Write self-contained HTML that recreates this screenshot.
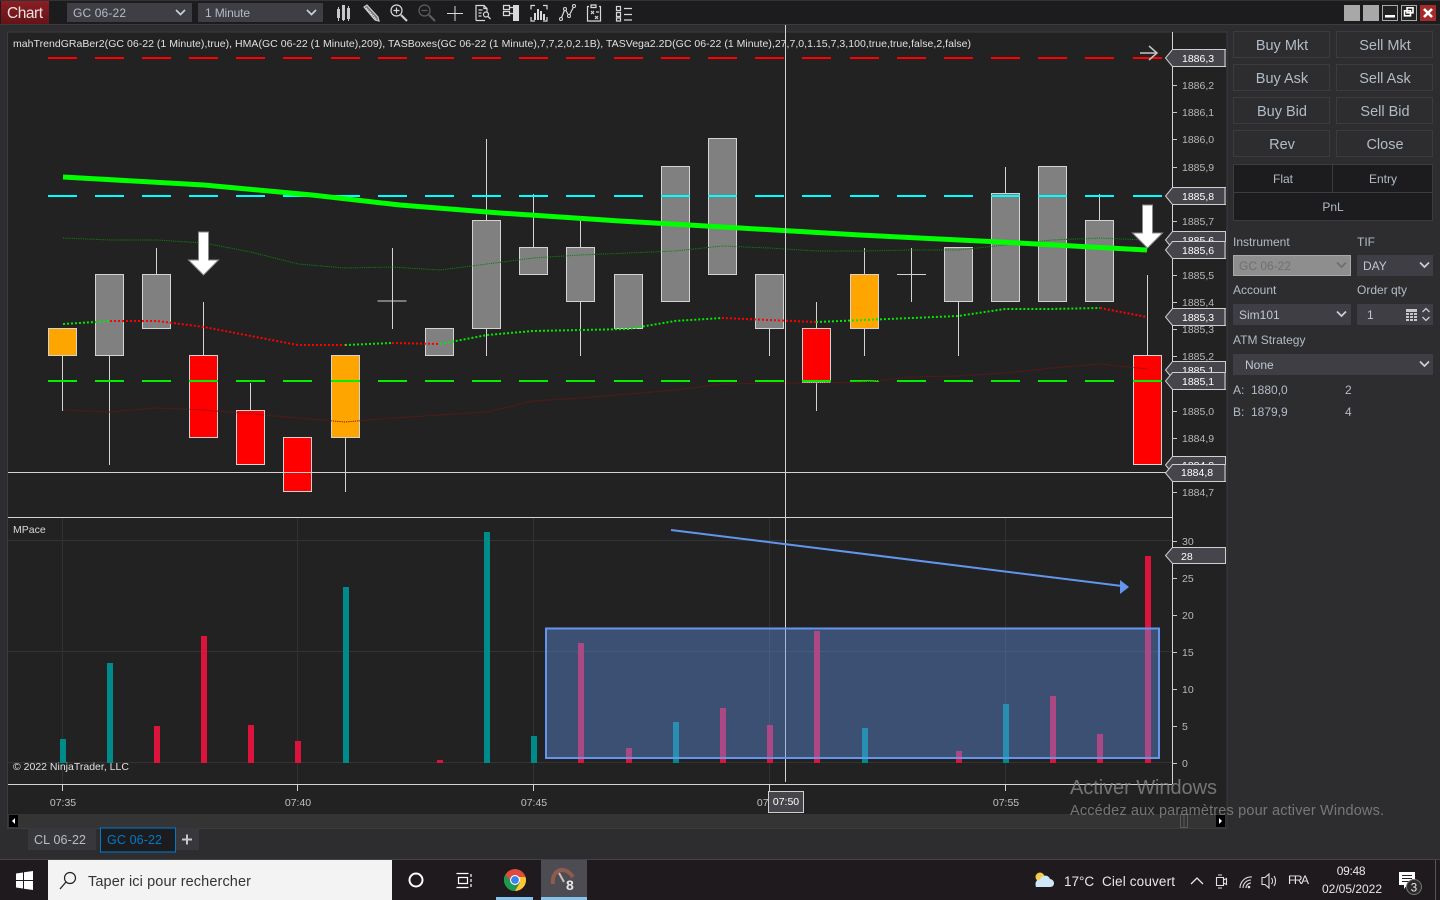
<!DOCTYPE html>
<html><head><meta charset="utf-8"><title>Chart</title>
<style>
html,body{margin:0;padding:0;background:#2d2d30;overflow:hidden}
svg{display:block}
text{font-family:"Liberation Sans",sans-serif}
.s{font-size:10.5px;fill:#b8b8b8}
.tag{font-size:10.5px;fill:#fff;font-weight:400}
.b{font-size:14.5px;fill:#b2bcc6;text-anchor:middle}
.l{font-size:12px;fill:#b2bcc6}
.h{fill:#2d2d30;stroke:#3c3c40;stroke-width:1}
.c{fill:#3e3e44}
.ch{fill:none;stroke:#c8d0d8;stroke-width:1.7}
.k{stroke:#d3d3d3;stroke-width:1;fill:#808080}
.i{fill:none;stroke:#d8d8d8;stroke-width:1.2}
</style></head><body>
<svg width="1440" height="900" viewBox="0 0 1440 900" xmlns="http://www.w3.org/2000/svg">
<rect width="1440" height="900" fill="#2d2d30"/>
<!-- toolbar -->
<rect width="1440" height="24" fill="#1c1c1e"/>
<rect y="0" width="1440" height="1" fill="#333"/>
<rect y="24" width="1440" height="1" fill="#3c3c40"/>
<defs><linearGradient id="r" x1="0" y1="0" x2="0" y2="1"><stop offset="0" stop-color="#8a1e24"/><stop offset="1" stop-color="#651317"/></linearGradient></defs>
<rect x="1" y="1" width="48" height="23" fill="url(#r)"/>
<text x="7" y="18" font-size="15.5" fill="#e8e0e0" textLength="36">Chart</text>
<rect x="67" y="3" width="125" height="19" class="c"/>
<text x="73" y="17" font-size="12" fill="#b2bcc6" textLength="53">GC 06-22</text>
<path d="M176 10l4.500 4.500 4.500-4.500" class="ch"/>
<rect x="198" y="3" width="125" height="19" class="c"/>
<text x="205" y="17" font-size="12" fill="#b2bcc6" textLength="45">1 Minute</text>
<path d="M307 10l4.500 4.500 4.500-4.500" class="ch"/>
<!-- toolbar icons -->
<g fill="#c8c8c8"><rect x="337" y="9" width="3" height="9"/><rect x="342" y="5" width="3" height="15"/><rect x="347" y="8" width="3" height="11"/><rect x="338" y="7" width="1" height="14"/><rect x="343" y="5" width="1" height="16"/><rect x="348" y="6" width="1" height="15"/></g>
<path d="M364 7l3-2 11 12 1 4-4-1z" fill="#777" stroke="#ccc" stroke-width="1.2"/><path d="M366 8l10 11" stroke="#eee" stroke-width="1.500" stroke-dasharray="1 1"/>
<g class="i"><circle cx="396.500" cy="10.500" r="5.500"/><path d="M393.500 10.500h6M396.500 7.500v6"/></g><path d="M401 15l6 6" stroke="#ccc" stroke-width="2.200"/>
<g fill="none" stroke="#5d5d5d" stroke-width="1.200"><circle cx="424.500" cy="10.500" r="5.500"/><path d="M421.500 10.500h6"/></g><path d="M429 15l6 6" stroke="#5d5d5d" stroke-width="2.200"/>
<path d="M447 13.500h16M455 6v15" stroke="#d8d8d8" stroke-width="1"/>
<path d="M476 20.500v-15h8l3 3v4M476 20.500h9M484 5.500v3h3M478.500 10h4M478.500 13h3M478.500 16h3" class="i"/><circle cx="486" cy="14.500" r="2.500" class="i"/><path d="M488 16.500l2.500 2.500" stroke="#d8d8d8" stroke-width="1.300"/>
<path d="M503.500 5.500h6v4h-6zM503.500 11.500h6v4h-6zM509 7.500h4M509 13.500h4" class="i"/><rect x="513" y="5" width="6" height="16" fill="#d8d8d8"/>
<path d="M531 9.500v-4h4M543 5.500h4v4M531 17v4h4M543 21h4v-4" class="i"/><g fill="#d8d8d8"><rect x="534" y="13" width="2" height="7"/><rect x="537" y="9" width="2" height="11"/><rect x="540" y="11" width="2" height="9"/><rect x="543" y="14" width="2" height="6"/></g>
<path d="M561 19l4-10 4 7 5-10" class="i"/><g fill="#1c1c1e" stroke="#d8d8d8"><circle cx="561" cy="19" r="1.500"/><circle cx="565" cy="9" r="1.500"/><circle cx="569" cy="16" r="1.500"/><circle cx="574" cy="6" r="1.500"/></g>
<path d="M589 6.500h-1.500v14.500h13v-14.500h-1.500M591 5h5v2.500h-5zM591 11l3 3M594 11l-3 3M595 16l3 3M598 16l-3 3M596 12h3" class="i"/>
<path d="M616.500 6.500h4v4h-4zM616.500 12.500h4v4h-4zM616.500 18h4v3h-4zM624 8.500h8M624 14.500h8M624 20h8" class="i"/>
<!-- window buttons -->
<rect x="1344" y="5" width="16" height="16" fill="#a8a8a8"/><rect x="1363" y="5" width="16" height="16" fill="#a8a8a8"/>
<rect x="1382.500" y="5.500" width="15" height="15" fill="#222" stroke="#aaa"/><rect x="1385" y="15" width="10" height="2.500" fill="#fff"/>
<rect x="1401.500" y="5.500" width="15" height="15" fill="#222" stroke="#aaa"/><path d="M1407 7.800h6v5h-6zM1404.500 10.800h6v5h-6z" fill="#222" stroke="#fff" stroke-width="1.600"/>
<rect x="1420" y="5" width="16" height="16" fill="#a52a2a"/><path d="M1424 9l8 8M1432 9l-8 8" stroke="#fff" stroke-width="2.600"/>

<!-- chart frame -->
<rect x="8" y="32" width="1219" height="796" fill="#222222"/>
<path d="M7.500 32v796.500h1219.500v-796.500z" fill="none" stroke="#3c3c40"/>
<rect x="8" y="814" width="1218" height="14" fill="#343434"/>

<!-- lower panel grid -->
<path d="M8 540.500h1164M8 651.500h1164M8 762.500h1164M62.500 518v267M297.500 518v267M533.500 518v267M769.500 518v267M1005.500 518v267" stroke="#333335" stroke-width="1"/>

<!-- wicks -->
<path d="M62.500 356v55M109.500 356v109M156.500 248v26M203.500 302v54M250.500 383v28M345.500 437v55M392.500 248v81M377.500 301h29M486.500 139v81M486.500 329v27M533.500 194v53M580.500 221v26M580.500 302v54M769.500 329v27M816.500 302v27M816.500 383v28M864.500 248v26M864.500 329v27M911.500 248v54M897 274.500h29M958.500 302v54M1005.500 167v27M1099.500 194v26M1147.500 275v80" stroke="#d3d3d3" stroke-width="1" fill="none"/>
<!-- candle bodies -->
<g class="k">
<rect x="48.500" y="328.500" width="28" height="27" fill="#ffa500"/>
<rect x="95.500" y="274.500" width="28" height="81"/>
<rect x="142.500" y="274.500" width="28" height="54"/>
<rect x="189.500" y="355.500" width="28" height="82" fill="#ff0000"/>
<rect x="236.500" y="410.500" width="28" height="54" fill="#ff0000"/>
<rect x="283.500" y="437.500" width="28" height="54" fill="#ff0000"/>
<rect x="331.500" y="355.500" width="28" height="82" fill="#ffa500"/>
<rect x="425.500" y="328.500" width="28" height="27"/>
<rect x="472.500" y="220.500" width="28" height="108"/>
<rect x="519.500" y="247.500" width="28" height="27"/>
<rect x="566.500" y="247.500" width="28" height="54"/>
<rect x="614.500" y="274.500" width="28" height="54"/>
<rect x="661.500" y="166.500" width="28" height="135"/>
<rect x="708.500" y="138.500" width="28" height="136"/>
<rect x="755.500" y="274.500" width="28" height="54"/>
<rect x="802.500" y="328.500" width="28" height="54" fill="#ff0000"/>
<rect x="850.500" y="274.500" width="28" height="54" fill="#ffa500"/>
<rect x="944.500" y="247.500" width="28" height="54"/>
<rect x="991.500" y="193.500" width="28" height="108"/>
<rect x="1038.500" y="166.500" width="28" height="135"/>
<rect x="1085.500" y="220.500" width="28" height="81"/>
<rect x="1133.500" y="355.500" width="28" height="109" fill="#ff0000"/>
</g>
<!-- dashes -->
<g id="d" fill="none" stroke-width="2">
<path stroke="#ff0000" d="M48 58h29M95 58h29M142 58h29M189 58h29M236 58h29M283 58h29M331 58h29M378 58h29M425 58h29M472 58h29M519 58h29M566 58h29M614 58h29M661 58h29M708 58h29M755 58h29M802 58h29M850 58h29M897 58h29M944 58h29M991 58h29M1038 58h29M1085 58h29M1133 58h29"/>
<path stroke="#00ffff" d="M48 196h29M95 196h29M142 196h29M189 196h29M236 196h29M283 196h29M331 196h29M378 196h29M425 196h29M472 196h29M519 196h29M566 196h29M614 196h29M661 196h29M708 196h29M755 196h29M802 196h29M850 196h29M897 196h29M944 196h29M991 196h29M1038 196h29M1085 196h29M1133 196h29"/>
<path stroke="#00f000" d="M48 381h29M95 381h29M142 381h29M189 381h29M236 381h29M283 381h29M331 381h29M378 381h29M425 381h29M472 381h29M519 381h29M566 381h29M614 381h29M661 381h29M708 381h29M755 381h29M802 381h29M850 381h29M897 381h29M944 381h29M991 381h29M1038 381h29M1085 381h29M1133 381h29"/>
</g>
<!-- thin indicator lines -->
<path d="M63 238L110 240L157 240L204 243L251 252L298 264L345 268L392 267L440 270L487 264L533 258L580 255L628 253L675 251L722 246L769 248L817 251L864 251L912 250L958 250L1005 245L1052 240L1100 238L1147 240" fill="none" stroke="#0d7f0d" stroke-width="1" stroke-dasharray="1.200 1"/>
<path d="M63 410L110 412L157 408L204 410L251 414L298 418L345 422L392 418L440 415L487 412L533 401L580 398L628 394L675 390L722 384L769 383L816 383L864 382L912 377L958 376L1005 373L1052 368L1100 364L1147 369" fill="none" stroke="#7d1212" stroke-width="1" stroke-dasharray="1.200 1"/>
<!-- dotted HMA -->
<g fill="none" stroke-width="2" stroke-dasharray="2 2">
<path stroke="#00e800" d="M63 324L110 321M345 345L392 343M440 344L487 335L533 331L580 330L628 329L675 321L722 318M816 322L864 320L912 318L958 316L1005 309L1052 309L1100 308"/>
<path stroke="#ff0000" d="M110 321L157 321L204 327L251 336L298 345L345 345M392 343L440 344M722 318L769 320L816 322M1100 308L1147 317"/>
</g>
<!-- down arrows -->
<path d="M198.500 232h10v28h10l-15 15-15-15h10z" fill="#fff" stroke="#8a8a8a"/>
<path d="M1142.500 205h10v28h10l-15 15-15-15h10z" fill="#fff" stroke="#8a8a8a"/>
<!-- thick green -->
<path d="M63 177L204 185L312 195L400 205L500 213L620 221L740 228L860 235L1000 242L1147 250" fill="none" stroke="#00ff00" stroke-width="5"/>
<!-- arrow right top -->
<path d="M1140 53h17M1149 46l8 7-8 7" fill="none" stroke="#c4c4c4" stroke-width="1.500"/>

<!-- separators and crosshair -->
<path d="M8 472.500h1164M8 517.500h1164M8 784.500h1164M785.500 25v757M1172.500 32v752" stroke="#d3d3d3" stroke-width="1" fill="none"/>
<path d="M62.500 785v6M297.500 785v6M533.500 785v6M769.500 785v6M1005.500 785v6" stroke="#d3d3d3" stroke-width="1"/>

<!-- legend -->
<text x="13" y="47" font-size="10.500" fill="#e0e0e0" textLength="958" lengthAdjust="spacing">mahTrendGRaBer2(GC 06-22 (1 Minute),true), HMA(GC 06-22 (1 Minute),209), TASBoxes(GC 06-22 (1 Minute),7,7,2,0,2.1B), TASVega2.2D(GC 06-22 (1 Minute),27,7,0,1.15,7,3,100,true,true,false,2,false)</text>
<text x="13" y="533" font-size="10.500" fill="#d8d8d8">MPace</text>

<!-- volume bars -->
<g fill="#008b8b"><rect x="60" y="739" width="6" height="24"/><rect x="107" y="663" width="6" height="100"/><rect x="343" y="587" width="6" height="176"/><rect x="484" y="532" width="6" height="231"/><rect x="531" y="736" width="6" height="27"/><rect x="673" y="722" width="6" height="41"/><rect x="862" y="728" width="6" height="35"/><rect x="1003" y="704" width="6" height="59"/></g>
<g fill="#dc143c"><rect x="154" y="726" width="6" height="37"/><rect x="201" y="636" width="6" height="127"/><rect x="248" y="725" width="6" height="38"/><rect x="295" y="741" width="6" height="22"/><rect x="437" y="760" width="6" height="3"/><rect x="578" y="643" width="6" height="120"/><rect x="626" y="748" width="6" height="15"/><rect x="720" y="708" width="6" height="55"/><rect x="767" y="725" width="6" height="38"/><rect x="814" y="631" width="6" height="132"/><rect x="956" y="751" width="6" height="12"/><rect x="1050" y="696" width="6" height="67"/><rect x="1097" y="734" width="6" height="29"/><rect x="1145" y="556" width="6" height="207"/></g>
<text x="13" y="770" font-size="10.500" fill="#e0e0e0">© 2022 NinjaTrader, LLC</text>
<!-- blue rectangle -->
<rect x="546" y="628.500" width="613" height="129.500" fill="#6495ed" fill-opacity=".4" stroke="#6495ed" stroke-width="2"/>
<path d="M671 530L1122 586" stroke="#6495ed" stroke-width="2" fill="none"/>
<path d="M1129 587L1120 580L1120 594z" fill="#6495ed"/>

<!-- price scale ticks -->
<path d="M1172 85.500h5M1172 112.500h5M1172 139.500h5M1172 167.500h5M1172 221.500h5M1172 275.500h5M1172 302.500h5M1172 329.500h5M1172 356.500h5M1172 411.500h5M1172 438.500h5M1172 492.500h5M1172 541.500h5M1172 578.500h5M1172 615.500h5M1172 652.500h5M1172 689.500h5M1172 726.500h5M1172 763.500h5" stroke="#c8c8c8"/>
<g class="s">
<text x="1182" y="89" class="s">1886,2</text><text x="1182" y="116" class="s">1886,1</text><text x="1182" y="143" class="s">1886,0</text><text x="1182" y="171" class="s">1885,9</text><text x="1182" y="225" class="s">1885,7</text><text x="1182" y="279" class="s">1885,5</text><text x="1182" y="306" class="s">1885,4</text><text x="1182" y="333" class="s">1885,3</text><text x="1182" y="360" class="s">1885,2</text><text x="1182" y="415" class="s">1885,0</text><text x="1182" y="442" class="s">1884,9</text><text x="1182" y="496" class="s">1884,7</text>
<text x="1182" y="545" class="s">30</text><text x="1182" y="582" class="s">25</text><text x="1182" y="619" class="s">20</text><text x="1182" y="656" class="s">15</text><text x="1182" y="693" class="s">10</text><text x="1182" y="730" class="s">5</text><text x="1182" y="767" class="s">0</text>
</g>
<!-- tags -->
<g fill="#45454b" stroke="#cfcfcf" stroke-width="1">
<path d="M1225.500 49.500h-53l-7 8.500 7 8.500h53z"/>
<path d="M1225.500 187.500h-53l-7 8.500 7 8.500h53z"/>
<path d="M1225.500 231.500h-53l-7 8.500 7 8.500h53z"/>
</g>
<text x="1182" y="244" class="tag">1885,6</text>
<path d="M1225.500 241.500h-53l-7 8.500 7 8.500h53z" fill="#45454b" stroke="#cfcfcf"/>
<path d="M1225.500 308.500h-53l-7 8.500 7 8.500h53z" fill="#45454b" stroke="#cfcfcf"/>
<path d="M1225.500 361.500h-53l-7 8.500 7 8.500h53z" fill="#45454b" stroke="#cfcfcf"/>
<text x="1182" y="374" class="tag">1885,1</text>
<path d="M1225.500 372.500h-53l-7 8.500 7 8.500h53z" fill="#45454b" stroke="#cfcfcf"/>
<path d="M1225.500 456.500h-53l-7 8.500 7 8.500h53z" fill="#45454b" stroke="#cfcfcf"/>
<text x="1182" y="469" class="tag">1884,8</text>
<path d="M1225.500 464.500h-53l-7 8.500 7 8.500h53z" fill="#45454b" stroke="#cfcfcf"/>
<path d="M1225.500 547.500h-53l-7 8 7 8h53z" fill="#45454b" stroke="#cfcfcf"/>
<g fill="#8f8f8f"><rect x="1224" y="50" width="2" height="16"/><rect x="1224" y="188" width="2" height="16"/><rect x="1224" y="242" width="2" height="16"/><rect x="1224" y="309" width="2" height="16"/><rect x="1224" y="373" width="2" height="16"/><rect x="1224" y="465" width="2" height="16"/></g>
<text x="1182" y="62" class="tag">1886,3</text><text x="1182" y="200" class="tag">1885,8</text><text x="1182" y="254" class="tag">1885,6</text><text x="1182" y="321" class="tag">1885,3</text><text x="1182" y="385" class="tag">1885,1</text><text x="1181" y="476" class="tag">1884,8</text><text x="1181" y="560" class="tag">28</text>

<!-- time labels -->
<g font-size="10.500" fill="#c0c0c0" text-anchor="middle"><text x="63" y="806">07:35</text><text x="298" y="806">07:40</text><text x="534" y="806">07:45</text><text x="770" y="806">07:50</text><text x="1006" y="806">07:55</text></g>
<rect x="768.500" y="791.500" width="35" height="21" fill="#45454b" stroke="#cfcfcf"/>
<text x="786" y="805" font-size="10.500" fill="#fff" text-anchor="middle">07:50</text>

<!-- scrollbar buttons -->
<rect x="9" y="815" width="9" height="12" fill="#000"/><path d="M15 818v6l-3-3z" fill="#fff"/>
<rect x="1216" y="815" width="9" height="12" fill="#000"/><path d="M1219 818v6l3-3z" fill="#fff"/>
<rect x="1180.500" y="814.500" width="7" height="13" fill="none" stroke="#5a5a5a"/><path d="M1184 815v12" stroke="#5a5a5a"/>

<!-- tabs -->
<rect x="28" y="828" width="68" height="22" fill="#38383c"/>
<text x="34" y="844" font-size="12.500" fill="#b8bec4" textLength="52">CL 06-22</text>
<rect x="100.500" y="828" width="75" height="24" fill="#1c1c1e" stroke="#007acc"/>
<text x="107" y="844" font-size="12.500" fill="#007acc" textLength="55">GC 06-22</text>
<rect x="176" y="828" width="23" height="22" fill="#38383c"/>
<path d="M182 839.500h10M187 834.500v10" stroke="#c8c8c8" stroke-width="2"/>

<!-- right panel buttons -->
<g class="h">
<rect x="1233.500" y="31.500" width="96" height="26"/><rect x="1336.500" y="31.500" width="96" height="26"/>
<rect x="1233.500" y="64.500" width="96" height="26"/><rect x="1336.500" y="64.500" width="96" height="26"/>
<rect x="1233.500" y="97.500" width="96" height="26"/><rect x="1336.500" y="97.500" width="96" height="26"/>
<rect x="1233.500" y="130.500" width="96" height="26"/><rect x="1336.500" y="130.500" width="96" height="26"/>
</g>
<text x="1282" y="50" class="b">Buy Mkt</text><text x="1385" y="50" class="b">Sell Mkt</text>
<text x="1282" y="83" class="b">Buy Ask</text><text x="1385" y="83" class="b">Sell Ask</text>
<text x="1282" y="116" class="b">Buy Bid</text><text x="1385" y="116" class="b">Sell Bid</text>
<text x="1282" y="149" class="b">Rev</text><text x="1385" y="149" class="b">Close</text>
<rect x="1233.500" y="164.500" width="199" height="56" fill="#1c1c1e" stroke="#3c3c40"/>
<path d="M1234 192.500h198M1332.500 165v27" stroke="#3c3c40"/>
<g font-size="12" fill="#b2bcc6" text-anchor="middle"><text x="1283" y="183">Flat</text><text x="1383" y="183">Entry</text><text x="1333" y="211">PnL</text></g>

<!-- form -->
<text x="1233" y="246" class="l">Instrument</text><text x="1357" y="246" class="l">TIF</text>
<rect x="1233.500" y="255.500" width="117" height="20" fill="#8e8e8e" stroke="#a8a8a8"/>
<text x="1239" y="270" font-size="12" fill="#707070">GC 06-22</text>
<path d="M1337 262.500l4.500 4.500 4.500-4.500" fill="none" stroke="#6e6e6e" stroke-width="1.700"/>
<rect x="1357" y="255" width="76" height="21" class="c"/>
<text x="1363" y="270" font-size="12" fill="#c0c8d0">DAY</text>
<path d="M1420 262.500l4.500 4.500 4.500-4.500" class="ch"/>
<text x="1233" y="294" class="l">Account</text><text x="1357" y="294" class="l">Order qty</text>
<rect x="1233" y="304" width="118" height="21" class="c"/>
<text x="1239" y="319" font-size="12" fill="#c0c8d0">Sim101</text>
<path d="M1337 311.500l4.500 4.500 4.500-4.500" class="ch"/>
<rect x="1357" y="304" width="76" height="21" class="c"/>
<text x="1367" y="319" font-size="12" fill="#c0c8d0">1</text>
<g fill="#c8c8c8"><rect x="1406" y="309" width="11" height="3"/><rect x="1406" y="313" width="3" height="2"/><rect x="1410" y="313" width="3" height="2"/><rect x="1414" y="313" width="3" height="2"/><rect x="1406" y="316" width="3" height="2"/><rect x="1410" y="316" width="3" height="2"/><rect x="1414" y="316" width="3" height="2"/><rect x="1406" y="319" width="3" height="2"/><rect x="1410" y="319" width="3" height="2"/><rect x="1414" y="319" width="3" height="2"/></g>
<path d="M1422.500 312l3.500-3.500 3.500 3.500M1422.500 317l3.500 3.500 3.500-3.500" fill="none" stroke="#c8d0d8" stroke-width="1.300"/>
<text x="1233" y="344" class="l">ATM Strategy</text>
<rect x="1233" y="354" width="200" height="21" class="c"/>
<text x="1245" y="369" font-size="12" fill="#c0c8d0">None</text>
<path d="M1420 361.500l4.500 4.500 4.500-4.500" class="ch"/>
<g class="l"><text x="1233" y="394" class="l">A:</text><text x="1251" y="394" class="l">1880,0</text><text x="1345" y="394" class="l">2</text><text x="1233" y="416" class="l">B:</text><text x="1251" y="416" class="l">1879,9</text><text x="1345" y="416" class="l">4</text></g>

<!-- watermark -->
<text x="1070" y="794" font-size="20" fill="#8a8a8a" fill-opacity=".8" textLength="147">Activer Windows</text>
<text x="1070" y="815" font-size="14.500" fill="#8a8a8a" fill-opacity=".8" textLength="314">Accédez aux paramètres pour activer Windows.</text>

<!-- bottom line and taskbar -->
<rect y="859" width="1440" height="1" fill="#444448"/>
<rect y="860" width="1440" height="40" fill="#1e1a1e"/>
<g fill="#fff"><path d="M16 873.500l7-1v7.500h-7zM24 872.300l9-1.300v9h-9zM16 881h7v7.500l-7-1zM24 881h9v9l-9-1.300z"/></g>
<rect x="48" y="860" width="344" height="40" fill="#f3f3f3"/>
<circle cx="70" cy="878" r="5.500" fill="none" stroke="#222" stroke-width="1.200"/><path d="M66 882l-6 7" stroke="#222" stroke-width="1.300"/>
<text x="88" y="886" font-size="14.500" fill="#333" textLength="163">Taper ici pour rechercher</text>
<circle cx="416" cy="880" r="6.500" fill="none" stroke="#fff" stroke-width="2"/>
<path d="M456.500 873.500h12M456.500 887.500h12M458.500 877.500h9v6h-9zM471 874v3M471 879v3M471 884v3" fill="none" stroke="#fff" stroke-width="1.200"/>
<!-- chrome -->
<circle cx="515" cy="880" r="11" fill="#dd4b3e"/>
<path d="M505.500 885.500a11 11 0 0 0 9.500 5.500l5-9-5 3.500-3.500-1z" fill="#1d9a50"/><path d="M505.500 885.500a11 11 0 0 1-.3-10.700l6 6.500 3 4z" fill="#1d9a50"/>
<path d="M526 880a11 11 0 0 1-11 11l5-8.500-1.500-5.500h7z" fill="#fcc934"/>
<circle cx="515" cy="880" r="5" fill="#fff"/><circle cx="515" cy="880" r="3.900" fill="#3b82f1"/>
<rect x="496" y="897" width="37" height="3" fill="#86c3ec"/>
<!-- ninja -->
<rect x="541" y="860" width="46" height="40" fill="#4c4c52"/>
<rect x="541" y="897" width="46" height="3" fill="#86c3ec"/>
<path d="M553 884c-1-8 3-14 9-14 5 0 8 3 11 7" fill="none" stroke="#8f5a50" stroke-width="4"/><path d="M559 873l5 9" stroke="#c8c0b8" stroke-width="2"/>
<text x="566" y="890" font-size="14" font-weight="700" fill="#e8e8e8">8</text>
<!-- tray -->
<circle cx="1040" cy="877" r="4.500" fill="#f8cc4a"/>
<path d="M1036 887h14c3 0 4-2 4-4s-2-4-4-4c-1-3-4-4-6.500-3-2.500 1-3 2.500-3.500 3.500-3 0-4.500 2-4.500 4.500 0 1.500.5 3 0.500 3z" fill="#cfe8f8"/>
<text x="1064" y="886" font-size="13.500" fill="#e8e8e8">17°C</text>
<text x="1102" y="886" font-size="13.500" fill="#e8e8e8" textLength="73">Ciel couvert</text>
<path d="M1191 884l6-6 6 6" fill="none" stroke="#e8e8e8" stroke-width="1.300"/>
<path d="M1216.500 877.500h7v8h-7zM1223.500 880l3-1.500v6l-3-1.500M1218 875h4M1218 888h4" fill="none" stroke="#e0e0e0" stroke-width="1.100"/>
<path d="M1240 888a11 11 0 0 1 12-11M1243 888a8 8 0 0 1 8-8M1246 888a5 5 0 0 1 5-5" fill="none" stroke="#e0e0e0" stroke-width="1.100"/><circle cx="1249" cy="887" r="1.300" fill="#e0e0e0"/>
<path d="M1262 877.500v7h3l4 3.500v-14l-4 3.500zM1271.500 878a5 5 0 0 1 0 6M1274 876a9 9 0 0 1 0 10" fill="none" stroke="#e0e0e0" stroke-width="1.100"/>
<text x="1288" y="884" font-size="12" fill="#e8e8e8" textLength="21">FRA</text>
<text x="1351" y="875" font-size="12" fill="#e8e8e8" text-anchor="middle" letter-spacing="-.3">09:48</text>
<text x="1352" y="893" font-size="12" fill="#e8e8e8" text-anchor="middle">02/05/2022</text>
<path d="M1399 872h16v13h-8l-3 4v-4h-5z" fill="#fff"/><path d="M1402 875.500h10M1402 878.500h10M1402 881.500h7" stroke="#222"/>
<circle cx="1414" cy="887" r="7.500" fill="#2b2b2b" stroke="#777"/>
<text x="1414" y="891.500" font-size="11.500" fill="#eee" text-anchor="middle">3</text>
<rect x="1435" y="860" width="1" height="40" fill="#555"/>
</svg>
</body></html>
